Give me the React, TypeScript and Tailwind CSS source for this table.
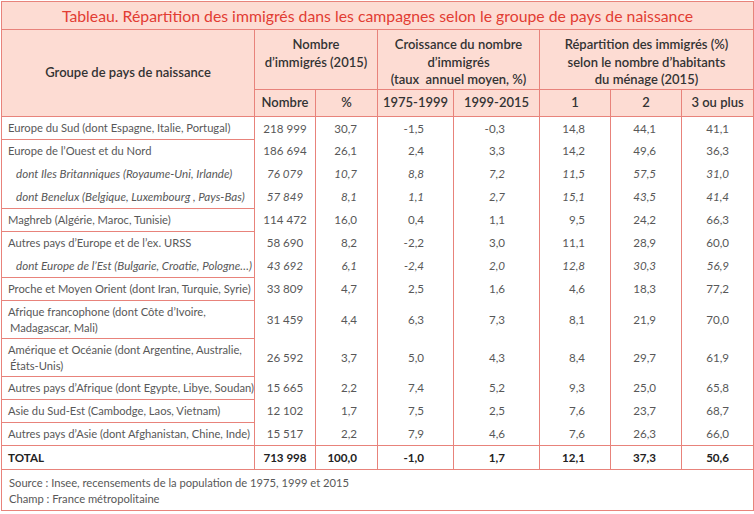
import React from 'react';

type Row = {
  label: string[];
  sub?: boolean;
  vals: string[];
  groupEnd?: boolean;
};

// Données du tableau
const rows: Row[] = [
  { label: ['Europe du Sud (dont Espagne, Italie, Portugal)'], vals: ['218 999', '30,7', '-1,5', '-0,3', '14,8', '44,1', '41,1'], groupEnd: true },
  { label: ['Europe de l’Ouest et du Nord'], vals: ['186 694', '26,1', '2,4', '3,3', '14,2', '49,6', '36,3'] },
  { label: ['dont Iles Britanniques (Royaume-Uni, Irlande)'], sub: true, vals: ['76 079', '10,7', '8,8', '7,2', '11,5', '57,5', '31,0'] },
  { label: ['dont Benelux (Belgique, Luxembourg , Pays-Bas)'], sub: true, vals: ['57 849', '8,1', '1,1', '2,7', '15,1', '43,5', '41,4'], groupEnd: true },
  { label: ['Maghreb (Algérie, Maroc, Tunisie)'], vals: ['114 472', '16,0', '0,4', '1,1', '9,5', '24,2', '66,3'], groupEnd: true },
  { label: ['Autres pays d’Europe et de l’ex. URSS'], vals: ['58 690', '8,2', '-2,2', '3,0', '11,1', '28,9', '60,0'] },
  { label: ['dont Europe de l’Est (Bulgarie, Croatie, Pologne…)'], sub: true, vals: ['43 692', '6,1', '-2,4', '2,0', '12,8', '30,3', '56,9'], groupEnd: true },
  { label: ['Proche et Moyen Orient (dont Iran, Turquie, Syrie)'], vals: ['33 809', '4,7', '2,5', '1,6', '4,6', '18,3', '77,2'], groupEnd: true },
  { label: ['Afrique francophone (dont Côte d’Ivoire,', 'Madagascar, Mali)'], vals: ['31 459', '4,4', '6,3', '7,3', '8,1', '21,9', '70,0'], groupEnd: true },
  { label: ['Amérique et Océanie (dont Argentine, Australie,', 'États-Unis)'], vals: ['26 592', '3,7', '5,0', '4,3', '8,4', '29,7', '61,9'], groupEnd: true },
  { label: ['Autres pays d’Afrique (dont Egypte, Libye, Soudan)'], vals: ['15 665', '2,2', '7,4', '5,2', '9,3', '25,0', '65,8'], groupEnd: true },
  { label: ['Asie du Sud-Est (Cambodge, Laos, Vietnam)'], vals: ['12 102', '1,7', '7,5', '2,5', '7,6', '23,7', '68,7'], groupEnd: true },
  { label: ['Autres pays d’Asie (dont Afghanistan, Chine, Inde)'], vals: ['15 517', '2,2', '7,9', '4,6', '7,6', '26,3', '66,0'] },
];

const total = ['713 998', '100,0', '-1,0', '1,7', '12,1', '37,3', '50,6'];

// alignement et marge droite de chaque colonne chiffrée
const valCls = [
  'text-center',
  'text-right pr-[20px]',
  'text-right pr-[29px]',
  'text-right pr-[34px]',
  'text-right pr-[25px]',
  'text-right pr-[25px]',
  'text-right pr-[24px]',
];

const B = 'border-[#e8837b]';

export default function App() {
  return (
    <div className="w-[754px] h-[514px] bg-white pl-px pt-px" style={{ fontFamily: 'Lato, "Open Sans", sans-serif' }}>
      <table className={`table-fixed border-collapse w-[752px] border ${B}`}>
        <colgroup>
          <col className="w-[253px]" />
          <col className="w-[61px]" />
          <col className="w-[62px]" />
          <col className="w-[76px]" />
          <col className="w-[86px]" />
          <col className="w-[71px]" />
          <col className="w-[71px]" />
          <col className="w-[72px]" />
        </colgroup>
        <thead className="bg-[#fddcd3] text-[#333]">
          <tr className="h-[28px]">
            <th colSpan={8} className={`border ${B} text-[15.8px] font-normal text-[#e23d33] text-center`}>
              Tableau. Répartition des immigrés dans les campagnes selon le groupe de pays de naissance
            </th>
          </tr>
          <tr className="h-[60px] text-[13px] font-semibold leading-[17.5px]">
            <th rowSpan={2} className={`border ${B} font-semibold`}>Groupe de pays de naissance</th>
            <th colSpan={2} className={`border ${B} align-top pt-[6px] font-semibold`}>
              Nombre<br />d’immigrés (2015)
            </th>
            <th colSpan={2} className={`border ${B} align-top pt-[6px] font-semibold`}>
              Croissance du nombre<br />d’immigrés<br />(taux&nbsp; annuel moyen, %)
            </th>
            <th colSpan={3} className={`border ${B} align-top pt-[6px] font-semibold`}>
              Répartition des immigrés (%)<br />selon le nombre d’habitants<br />du ménage (2015)
            </th>
          </tr>
          <tr className="h-[27px] text-[13px]">
            {['Nombre', '%', '1975-1999', '1999-2015', '1', '2', '3 ou plus'].map((h) => (
              <th key={h} className={`border ${B} font-semibold`}>{h}</th>
            ))}
          </tr>
        </thead>
        <tbody className="text-[11.6px] text-[#585858]">
          {rows.map((r, i) => (
            <tr key={i} className={r.label.length > 1 ? 'h-[38px]' : 'h-[23px]'}>
              <td
                className={`border-x ${B} ${r.groupEnd ? `border-b` : ''} ${
                  r.sub ? 'italic pl-[14px]' : 'pl-[6px] text-[11.2px]'
                } leading-[16px] whitespace-nowrap`}
              >
                {r.label.map((l, j) => (
                  <div key={j} className={j > 0 ? 'pl-[2px]' : ''}>{l}</div>
                ))}
              </td>
              {r.vals.map((v, j) => (
                <td key={j} className={`border-x ${B} ${valCls[j]} ${r.sub ? 'italic' : ''}`}>
                  {v}
                </td>
              ))}
            </tr>
          ))}
          <tr className="h-[24px] font-bold text-[#222]">
            <td className={`border ${B} pl-[6px] text-[11.6px]`}>TOTAL</td>
            {total.map((v, j) => (
              <td key={j} className={`border ${B} ${valCls[j]}`}>{v}</td>
            ))}
          </tr>
          <tr className="h-[41px]">
            <td colSpan={8} className={`border ${B} pl-[7px] text-[11.2px] leading-[16px] align-top pt-[5px]`}>
              <div>Source : Insee, recensements de la population de 1975, 1999 et 2015</div>
              <div>Champ : France métropolitaine</div>
            </td>
          </tr>
        </tbody>
      </table>
    </div>
  );
}
